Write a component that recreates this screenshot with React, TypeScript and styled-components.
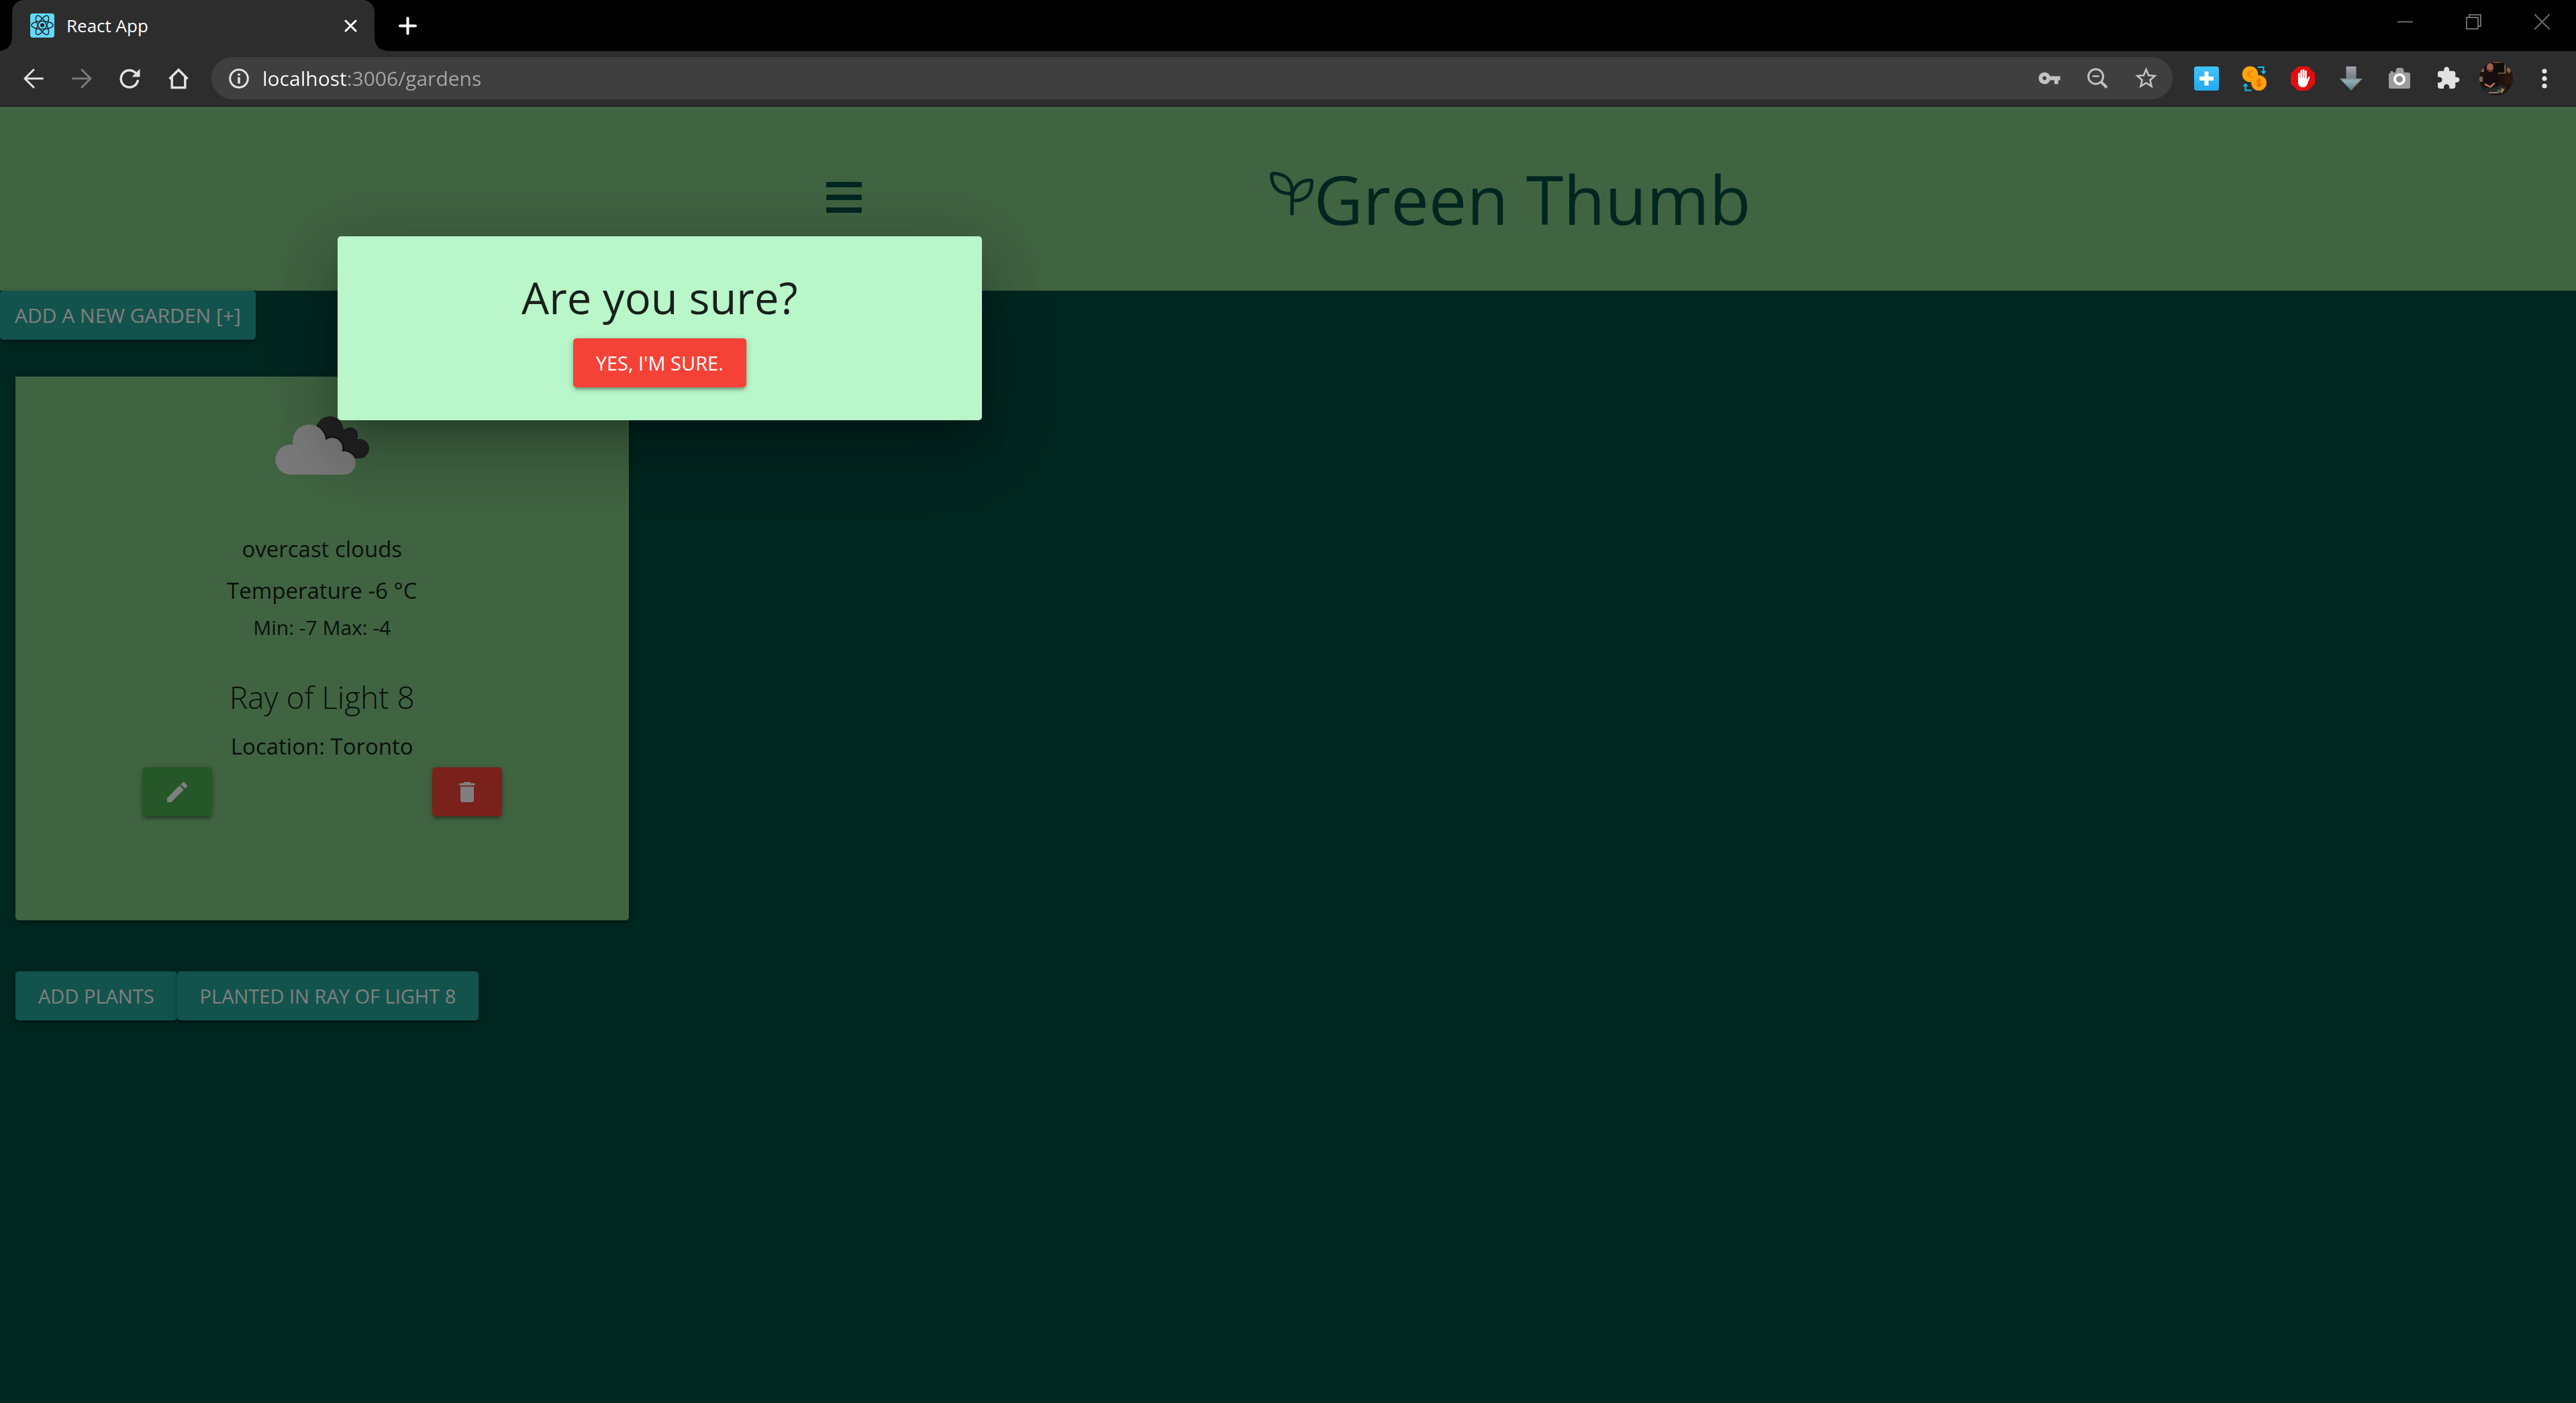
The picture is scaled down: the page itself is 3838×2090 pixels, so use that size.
import React from 'react';
import styled, { createGlobalStyle } from 'styled-components';

const GlobalStyle = createGlobalStyle`
  *, *::before, *::after { box-sizing: border-box; }
  html, body, #root { height: 100%; }
  body { margin: 0; font-family: "Open Sans", "Noto Sans", sans-serif; background: #004d40; }
  h1, h2, h3, p { margin: 0; font-weight: 400; }
  button { border: 0; padding: 0; margin: 0; background: none; font: inherit; color: inherit; cursor: pointer; }
  svg { display: block; flex: none; }
`;

/* ---------- browser frame ---------- */

const Window = styled.div`
  display: flex;
  flex-direction: column;
  min-height: 100vh;
`;

const TabStrip = styled.div`
  display: flex;
  align-items: center;
  height: 76px;
  padding-left: 18px;
  background: #000;
`;

const Tab = styled.div`
  position: relative;
  display: flex;
  align-items: center;
  gap: 18px;
  width: 540px;
  height: 76px;
  padding: 0 26px 0 27px;
  border-radius: 18px 18px 0 0;
  background: #2d2d2d;
  color: #fff;
  font-size: 26px;
  line-height: 36px;

  &::before, &::after {
    content: "";
    position: absolute;
    bottom: 0;
    width: 18px;
    height: 18px;
  }
  &::before { right: 100%; background: radial-gradient(circle at 0 0, transparent 17px, #2d2d2d 18px); }
  &::after { left: 100%; background: radial-gradient(circle at 100% 0, transparent 17px, #2d2d2d 18px); }
`;

const TabTitle = styled.span`
  flex: 1;
`;

const NewTabButton = styled.button`
  display: flex;
  align-items: center;
  justify-content: center;
  width: 63px;
  height: 76px;
  margin-left: 18px;
`;

const WindowControls = styled.div`
  display: flex;
  align-self: flex-start;
  margin-left: auto;
`;

const WindowButton = styled.button`
  display: flex;
  align-items: center;
  justify-content: center;
  width: 102px;
  height: 65px;
`;

const Toolbar = styled.div`
  display: flex;
  align-items: center;
  height: 83px;
  padding: 0 11px 0 14px;
  border-bottom: 2px solid #212121;
  background: #2d2d2d;
`;

const IconButton = styled.button<{ $tone?: string }>`
  display: flex;
  align-items: center;
  justify-content: center;
  flex: none;
  width: 72px;
  height: 63px;
  color: ${(p) => p.$tone || '#e2e2e2'};
`;

const AddressBar = styled.form`
  display: flex;
  align-items: center;
  flex: 1;
  height: 63px;
  margin: 0 14px 0 13px;
  padding: 0 4px 0 26px;
  border-radius: 32px;
  background: #3f3f3f;
`;

const AddressInput = styled.input`
  flex: 1;
  height: 63px;
  margin-left: 20px;
  padding: 0;
  border: 0;
  outline: 0;
  font: inherit;
  font-size: 30px;
  color: #fff;
  background: linear-gradient(90deg, #fff 126px, #a6a6a6 126px);
  -webkit-background-clip: text;
  background-clip: text;
  -webkit-text-fill-color: transparent;
`;

/* ---------- page ---------- */

const Viewport = styled.div`
  position: relative;
  flex: 1;
  background: #004d40;
  color: rgba(0, 0, 0, 0.87);
`;

const Header = styled.header`
  display: flex;
  align-items: center;
  justify-content: center;
  gap: 602px;
  height: 274px;
  padding-right: 4px;
  background: #81c784;
  color: #004d40;
`;

const MenuButton = styled.button`
  padding: 6px;
  margin-bottom: 4px;
`;

const Brand = styled.div`
  display: flex;
  align-items: center;
`;

const SproutIcon = styled.svg`
  width: 65px;
  height: 65px;
  margin-bottom: 16px;
`;

const BrandName = styled.h1`
  font-size: 101px;
  line-height: 136px;
`;

const Button = styled.button<{ $bg?: string; $pad?: number; $size?: number }>`
  display: inline-flex;
  align-items: center;
  justify-content: center;
  height: 73px;
  padding: 0 ${(p) => p.$pad ?? 34}px;
  border-radius: 5px;
  background: ${(p) => p.$bg || '#26a69a'};
  color: #fff;
  font-size: ${(p) => p.$size ?? 29}px;
  line-height: 73px;
  text-transform: uppercase;
  white-space: nowrap;
  box-shadow: 0 4px 4px rgba(0, 0, 0, 0.14), 0 7px 2px -4px rgba(0, 0, 0, 0.12), 0 2px 11px rgba(0, 0, 0, 0.2);
`;

const GardenGrid = styled.main`
  display: grid;
  grid-template-columns: repeat(4, 1fr);
  margin-top: 55px;
`;

const GardenColumn = styled.section`
  padding: 0 23px;
`;

const Card = styled.article`
  display: flex;
  flex-direction: column;
  align-items: center;
  padding: 58px 25px 155px;
  border-radius: 0 0 5px 5px;
  background: #81c784;
  text-align: center;
  box-shadow: 0 4px 4px rgba(0, 0, 0, 0.14), 0 7px 2px -4px rgba(0, 0, 0, 0.12), 0 2px 11px rgba(0, 0, 0, 0.2);
`;

const WeatherIcon = styled.svg`
  width: 140px;
  height: 88px;
  margin-bottom: 80px;
`;

const CardText = styled.p`
  font-size: 33px;
  line-height: 62px;
`;

const CardNote = styled.p`
  font-size: 30px;
  line-height: 48px;
`;

const GardenName = styled.h2`
  margin: 45px 0 9px;
  font-size: 46px;
  font-weight: 300;
  line-height: 68px;
`;

const CardActions = styled.div`
  display: grid;
  grid-template-columns: 1fr 1fr;
  justify-items: center;
  width: 100%;
`;

const PlantActions = styled.div`
  display: flex;
  margin-top: 76px;
`;

const Overlay = styled.div`
  position: absolute;
  inset: 0;
  padding: 193px 0 0 13.1%;
  background: rgba(0, 0, 0, 0.5);
`;

const Dialog = styled.div`
  display: flex;
  flex-direction: column;
  align-items: center;
  width: 960px;
  padding: 45px 54px 49px;
  border-radius: 5px;
  background: #b9f6ca;
  box-shadow: 0 25px 34px -16px rgba(0, 0, 0, 0.2), 0 54px 86px 7px rgba(0, 0, 0, 0.14),
    0 20px 104px 18px rgba(0, 0, 0, 0.12);
`;

const DialogTitle = styled.h2`
  margin-bottom: 15px;
  font-size: 65px;
  line-height: 92px;
`;

/* ---------- icons ---------- */

const Glyph = ({ d, size }: { d: string; size: number }) => (
  <svg width={size} height={size} viewBox="0 0 24 24" fill="currentColor" aria-hidden="true"><path d={d} /></svg>
);

const KEY = 'M12.65 10C11.83 7.67 9.61 6 7 6c-3.31 0-6 2.69-6 6s2.69 6 6 6c2.61 0 4.83-1.67 5.65-4H17v4h4v-4h2v-4H12.65zM7 14c-1.1 0-2-.9-2-2s.9-2 2-2 2 .9 2 2-.9 2-2 2z';
const STAR = 'M22 9.24l-7.19-.62L12 2 9.19 8.63 2 9.24l5.46 4.73L5.82 21 12 17.27 18.18 21l-1.63-7.03L22 9.24zM12 15.4l-3.76 2.27 1-4.28-3.32-2.88 4.38-.38L12 6.1l1.71 4.04 4.38.38-3.32 2.88 1 4.28L12 15.4z';
const PUZZLE = 'M20.5 11H19V7c0-1.1-.9-2-2-2h-4V3.5C13 2.12 11.88 1 10.5 1S8 2.12 8 3.5V5H4c-1.1 0-1.99.9-1.99 2v3.8H3.5c1.49 0 2.7 1.21 2.7 2.7s-1.21 2.7-2.7 2.7H2V20c0 1.1.9 2 2 2h3.8v-1.5c0-1.49 1.21-2.7 2.7-2.7 1.49 0 2.7 1.21 2.7 2.7V22H17c1.1 0 2-.9 2-2v-4h1.5c1.38 0 2.5-1.12 2.5-2.5S21.88 11 20.5 11z';
const PENCIL = 'M3 17.25V21h3.75L17.81 9.94l-3.75-3.75L3 17.25zM20.71 7.04c.39-.39.39-1.02 0-1.41l-2.34-2.34c-.39-.39-1.02-.39-1.41 0l-1.83 1.83 3.75 3.75 1.83-1.83z';
const TRASH = 'M6 19c0 1.1.9 2 2 2h8c1.1 0 2-.9 2-2V7H6v12zM19 4h-3.5l-1-1h-5l-1 1H5v2h14V4z';

const ReactIcon = () => (
  <svg width="36" height="36" viewBox="0 0 36 36" aria-hidden="true">
    <rect width="36" height="36" rx="4" fill="#61dafb" />
    <g fill="none" stroke="#20232a" strokeWidth="1.5">
      <ellipse cx="18" cy="17.5" rx="16" ry="6" />
      <ellipse cx="18" cy="17.5" rx="16" ry="6" transform="rotate(60 18 17.5)" />
      <ellipse cx="18" cy="17.5" rx="16" ry="6" transform="rotate(120 18 17.5)" />
    </g>
    <circle cx="18" cy="17.5" r="3" fill="#20232a" />
  </svg>
);

const CoinsIcon = () => (
  <svg width="38" height="38" viewBox="0 0 38 38" aria-hidden="true">
    <circle cx="25.5" cy="25.5" r="11.5" fill="#ff9a0a" />
    <circle cx="25.5" cy="25.5" r="8.5" fill="none" stroke="#ffa928" strokeWidth="1.5" />
    <path d="M28.5 22c-1-1.5-5.5-1.5-5.5 1s5.5 2 5.5 4.5-4.5 2.5-6 .5M25.7 19v13" fill="none" stroke="#e06f00" strokeWidth="1.6" />
    <circle cx="12.5" cy="12.5" r="11.8" fill="#ffab0f" />
    <circle cx="12.5" cy="12.5" r="8.8" fill="none" stroke="#ff9500" strokeWidth="1" />
    <path d="M17 8.5c-3-2.5-7.500-.5-7.500 4s4.500 6.500 7.500 4M7 11h7M7 14h7" fill="none" stroke="#f07f00" strokeWidth="1.6" />
    <path d="M24 2h8.5v9M29.5 8l3 3 3-3M14.5 36.5H5.5v-9M2.5 30.5l3-3 3 3" fill="none" stroke="#10c4f5" strokeWidth="2" />
  </svg>
);

const BlockerIcon = () => (
  <svg width="36" height="36" viewBox="0 0 36 36" aria-hidden="true">
    <path d="M10.5 0h15L36 10.5v15L25.5 36h-15L0 25.5v-15z" fill="#e40d0d" />
    <path d="M12.3 11v9M15.7 6.5V19M19.1 5.5V19M22.4 7.5V20" stroke="#fff" strokeWidth="2.8" strokeLinecap="round" />
    <path d="M10.9 17h12.9v3.5l2.2-4.5c.8-1.5 2.9-1 2.3.8L24.9 26c-1.2 3.5-3.5 5-7 5-4.5 0-7-3-7-7.5z" fill="#fff" />
  </svg>
);

const CameraIcon = () => (
  <svg width="34" height="32" viewBox="0 0 34 32" aria-hidden="true">
    <path d="M3 8l1-3h3l1 2h3l1-5 2-2h7l2 2 1 5h6q3 0 3 3v18q0 3-3 3H4q-3 0-3-3V10q0-2 2-2z" fill="#9c9c9c" />
    <circle cx="17" cy="17" r="7" fill="#8a8a8a" stroke="#fff" strokeWidth="4" />
  </svg>
);

const Avatar = () => (
  <svg width="50" height="50" viewBox="0 0 50 50" aria-hidden="true">
    <defs><clipPath id="avatar"><circle cx="25" cy="25" r="25" /></clipPath></defs>
    <g clipPath="url(#avatar)">
      <rect width="50" height="50" fill="#1c120e" />
      <path d="M0 10h7v5H0zM0 22h5v8H0z" fill="#7a6556" />
      <path d="M20 1h17v16H20z" fill="#0c0d0b" />
      <path d="M20 0h16v2H20z" fill="#6b4a35" />
      <path d="M28 16h10v2H28zM37 4h3v14h-3z" fill="#66533f" />
      <ellipse cx="44" cy="12" rx="3" ry="5" fill="#8a6049" />
      <path d="M38 20q6-6 12 0v14H38z" fill="#2b1710" />
      <path d="M7 24q2-10 9-10 11 1 13 10l-2 14H9z" fill="#190d0e" />
      <ellipse cx="16" cy="8.500" rx="5" ry="6.500" fill="#a06048" />
      <path d="M12 10q4 4 8 1v4h-6z" fill="#6a3525" />
      <path d="M8 32l8 4 6-5 2 1-7 7-9-4z" fill="#b87458" />
      <path d="M4 36q12 8 28-2l8 4-9 10H12z" fill="#26292a" />
      <path d="M14 45h14v2H14zM33 39l5 2-4 6-3-2z" fill="#967361" />
      <path d="M26 43l4-2 2 4-4 2z" fill="#4d6a52" />
    </g>
  </svg>
);

const line = { fill: 'none', stroke: 'currentColor', strokeLinecap: 'round', strokeLinejoin: 'round' } as const;

const darkCloud = (
  <>
    <circle cx="577" cy="121" r="61" />
    <circle cx="668" cy="145" r="35" />
    <circle cx="709" cy="205" r="44" />
    <path d="M577 100L640 118L668 140L709 170L709 249L560 240Z" />
  </>
);
const lightCloud = (
  <>
    <circle cx="401" cy="254" r="67" />
    <circle cx="485" cy="171" r="74" />
    <circle cx="588" cy="203" r="46" />
    <circle cx="641" cy="269" r="52" />
    <path d="M401 187L588 180L641 240V321H401Z" />
  </>
);

function Chrome() {
  return (
    <>
      <TabStrip>
        <Tab>
          <ReactIcon />
          <TabTitle>React App</TabTitle>
          <button type="button" aria-label="Close tab">
            <svg width="19" height="19" viewBox="0 0 19 19" {...line} strokeWidth="3"><path d="M2 2l15 15M17 2L2 17" /></svg>
          </button>
        </Tab>
        <NewTabButton type="button" aria-label="New tab">
          <svg width="27" height="27" viewBox="0 0 27 27" fill="none" stroke="#fff" strokeWidth="4" strokeLinecap="round"><path d="M13.5 2v23M2 13.5h23" /></svg>
        </NewTabButton>
        <WindowControls>
          <WindowButton type="button" aria-label="Minimize">
            <svg width="23" height="23" viewBox="0 0 23 23"><path d="M0 11.5h23" stroke="#6b6b6b" strokeWidth="2" /></svg>
          </WindowButton>
          <WindowButton type="button" aria-label="Restore">
            <svg width="23" height="23" viewBox="0 0 23 23" fill="none" stroke="#6b6b6b" strokeWidth="2"><path d="M1 5h17v17H1zM5 5V1h17v17h-4" /></svg>
          </WindowButton>
          <WindowButton type="button" aria-label="Close">
            <svg width="23" height="23" viewBox="0 0 23 23" fill="none" stroke="#6b6b6b" strokeWidth="2"><path d="M0 0l23 23M23 0L0 23" /></svg>
          </WindowButton>
        </WindowControls>
      </TabStrip>
      <Toolbar>
        <IconButton type="button" aria-label="Back">
          <svg width="30" height="30" viewBox="0 0 30 30" {...line} strokeWidth="3"><path d="M28.5 15H2.5M15 2L2 15l13 13" /></svg>
        </IconButton>
        <IconButton type="button" aria-label="Forward" $tone="#7b7b7b">
          <svg width="30" height="30" viewBox="0 0 30 30" {...line} strokeWidth="3"><path d="M1.5 15h26M15 2l13 13-13 13" /></svg>
        </IconButton>
        <IconButton type="button" aria-label="Reload">
          <svg width="32" height="32" viewBox="0 0 32 32" {...line} strokeWidth="3.5">
            <path d="M27.2 19.5A12.7 12.7 0 1 1 23.5 7" />
            <path d="M30.5 1.5v12h-12z" fill="currentColor" stroke="none" />
          </svg>
        </IconButton>
        <IconButton type="button" aria-label="Home">
          <svg width="30" height="32" viewBox="0 0 30 32" {...line} strokeLinecap="butt" strokeLinejoin="miter" strokeWidth="3.5"><path d="M1.5 16.5L15 3l13.5 13.5M5.2 13.5v16h19.6v-16" /></svg>
        </IconButton>
        <AddressBar onSubmit={(e) => e.preventDefault()}>
          <svg width="30" height="30" viewBox="0 0 30 30" fill="none" stroke="#e2e2e2" strokeWidth="3" aria-hidden="true">
            <circle cx="15" cy="15" r="13.3" /><path d="M15 13v9.5M15 7.5v3.2" strokeWidth="3.6" />
          </svg>
          <AddressInput aria-label="Address" defaultValue="localhost:3006/gardens" spellCheck={false} />
          <IconButton type="button" aria-label="Saved passwords" $tone="#c2c2c2"><Glyph d={KEY} size={35} /></IconButton>
          <IconButton type="button" aria-label="Zoom" $tone="#c2c2c2">
            <svg width="32" height="32" viewBox="0 0 32 32" fill="none" stroke="currentColor" strokeWidth="3"><circle cx="13.5" cy="13" r="11" /><path d="M8.5 12.5h10" strokeWidth="2.5" /><path d="M21 20.5l9 9" strokeWidth="4" /></svg>
          </IconButton>
          <IconButton type="button" aria-label="Bookmark" $tone="#c2c2c2"><Glyph d={STAR} size={39} /></IconButton>
        </AddressBar>
        <IconButton type="button" aria-label="Add extension">
          <svg width="37" height="36" viewBox="0 0 37 36">
            <defs><linearGradient id="plus" x2="0" y2="1"><stop stopColor="#3fc4fb" /><stop offset="1" stopColor="#25a9f0" /></linearGradient></defs>
            <rect width="37" height="36" rx="4" fill="url(#plus)" /><path d="M18.5 7.5v21M8 18h21" stroke="#fff" strokeWidth="6" />
          </svg>
        </IconButton>
        <IconButton type="button" aria-label="Currency converter"><CoinsIcon /></IconButton>
        <IconButton type="button" aria-label="Ad blocker"><BlockerIcon /></IconButton>
        <IconButton type="button" aria-label="Downloads">
          <svg width="34" height="36" viewBox="0 0 34 36">
            <defs>
              <linearGradient id="down" x2="0" y2="1"><stop stopColor="#a3a8ad" /><stop offset="0.45" stopColor="#757c83" /><stop offset="0.6" stopColor="#8fb0b6" /><stop offset="1" stopColor="#4a7a84" /></linearGradient>
            </defs>
            <path d="M9.5 0h15v18H34L17 36 0 18h9.5z" fill="url(#down)" /><path d="M19 33l12-13" stroke="#b04a4a" strokeWidth="1" />
          </svg>
        </IconButton>
        <IconButton type="button" aria-label="Screenshot"><CameraIcon /></IconButton>
        <IconButton type="button" aria-label="Extensions"><Glyph d={PUZZLE} size={37} /></IconButton>
        <IconButton type="button" aria-label="Profile"><Avatar /></IconButton>
        <IconButton type="button" aria-label="Browser menu">
          <svg width="8" height="30" viewBox="0 0 8 30" fill="currentColor"><circle cx="4" cy="4" r="3.6" /><circle cx="4" cy="15" r="3.6" /><circle cx="4" cy="26" r="3.6" /></svg>
        </IconButton>
      </Toolbar>
    </>
  );
}

export default function App() {
  return (
    <Window>
      <GlobalStyle />
      <Chrome />
      <Viewport>
        <Header>
          <MenuButton type="button" aria-label="Menu">
            <svg width="53" height="46" viewBox="0 0 53 46" fill="currentColor"><path d="M1 0h51l1 1v6l-1 1H1L0 7V1zM1 19h51l1 1v6l-1 1H1l-1-1v-6zM1 38h51l1 1v6l-1 1H1l-1-1v-6z" /></svg>
          </MenuButton>
          <Brand>
            <SproutIcon viewBox="0 0 65 65" {...line} strokeWidth="5" aria-hidden="true">
              <path d="M33 32.5C12 33 3 22 2.5 5.5Q2.5 2.5 5.5 2.5C22 3 33 11 33 28V62.5" />
              <path d="M33.5 42C32 24 44 12.5 60 12.5Q62.5 12.5 62.5 15C62 34 54 43.5 34 43" />
            </SproutIcon>
            <BrandName>Green Thumb</BrandName>
          </Brand>
        </Header>
        <Button type="button" $pad={22} $size={30}>Add a new garden [+]</Button>
        <GardenGrid>
          <GardenColumn>
            <Card>
              <WeatherIcon viewBox="333 57 420 264" role="img" aria-label="overcast">
                <defs><clipPath id="cloud">{darkCloud}</clipPath></defs>
                <g fill="#444">{darkCloud}</g>
                <g clipPath="url(#cloud)" fill="none" stroke="#222" strokeWidth="12">{lightCloud}</g>
                <g fill="#f2f2f2">{lightCloud}</g>
              </WeatherIcon>
              <CardText>overcast clouds</CardText>
              <CardText>Temperature -6 °C</CardText>
              <CardNote>Min: -7 Max: -4</CardNote>
              <GardenName>Ray of Light 8</GardenName>
              <CardText>Location: Toronto</CardText>
              <CardActions>
                <Button type="button" aria-label="Edit garden" $bg="#4caf50" $pad={32}><Glyph d={PENCIL} size={40} /></Button>
                <Button type="button" aria-label="Delete garden" $bg="#f44336" $pad={32}><Glyph d={TRASH} size={40} /></Button>
              </CardActions>
            </Card>
            <PlantActions>
              <Button type="button">Add plants</Button>
              <Button type="button">Planted in Ray of Light 8</Button>
            </PlantActions>
          </GardenColumn>
        </GardenGrid>
        <Overlay>
          <Dialog role="dialog" aria-modal="true" aria-labelledby="confirm-title">
            <DialogTitle id="confirm-title">Are you sure?</DialogTitle>
            <Button type="button" $bg="#f44336">Yes, I'm sure.</Button>
          </Dialog>
        </Overlay>
      </Viewport>
    </Window>
  );
}
